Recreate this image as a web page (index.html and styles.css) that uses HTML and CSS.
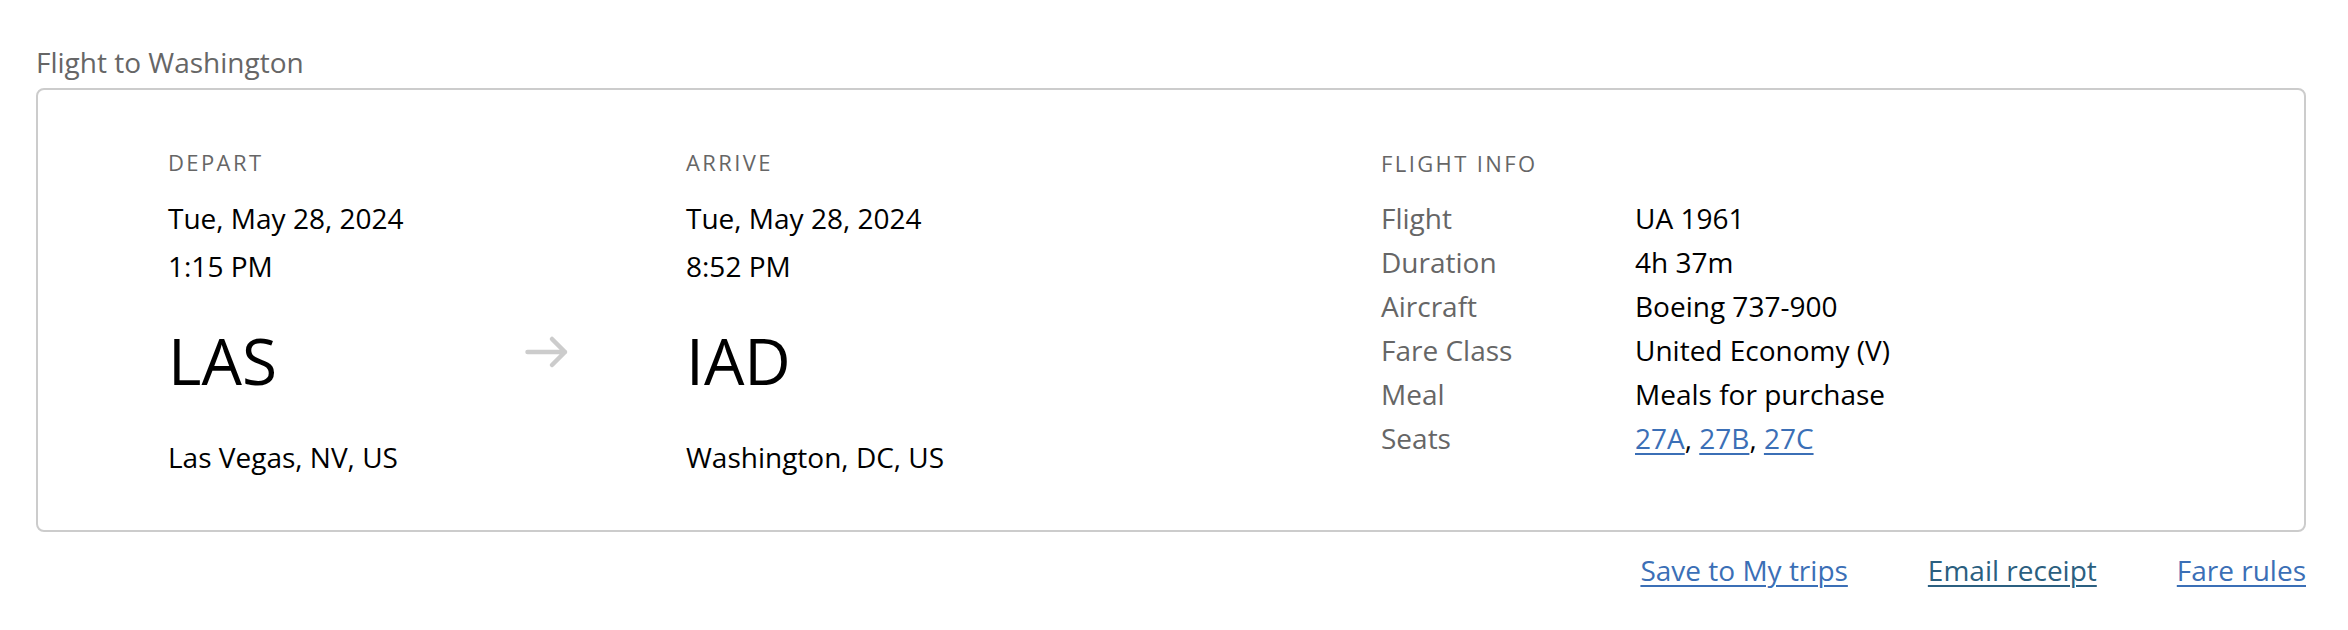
FILE: index.html
```html
<!DOCTYPE html>
<html lang="en">
<head>
<meta charset="utf-8">
<title>Flight to Washington</title>
<link rel="stylesheet" href="styles.css">
</head>
<body>
<section class="trip">
  <h2 class="trip-title">Flight to Washington</h2>
  <div class="card">
    <div class="leg">
      <div class="point">
        <div class="label">DEPART</div>
        <div class="date">Tue, May 28, 2024</div>
        <div class="time">1:15 PM</div>
        <div class="code">LAS</div>
        <div class="city">Las Vegas, NV, US</div>
      </div>
      <div class="arrow">
        <svg width="44" height="34" viewBox="0 0 44 34" aria-hidden="true">
          <path d="M2.5 17 H40 M27 4 L40 17 L27 30" fill="none" stroke="#cccccc" stroke-width="4.5" stroke-linecap="round" stroke-linejoin="round"/>
        </svg>
      </div>
      <div class="point">
        <div class="label">ARRIVE</div>
        <div class="date">Tue, May 28, 2024</div>
        <div class="time">8:52 PM</div>
        <div class="code">IAD</div>
        <div class="city">Washington, DC, US</div>
      </div>
    </div>
    <div class="info">
      <div class="label info-label">FLIGHT INFO</div>
      <dl class="info-list">
        <dt>Flight</dt><dd>UA 1961</dd>
        <dt>Duration</dt><dd>4h 37m</dd>
        <dt>Aircraft</dt><dd>Boeing 737-900</dd>
        <dt>Fare Class</dt><dd>United Economy (V)</dd>
        <dt>Meal</dt><dd>Meals for purchase</dd>
        <dt>Seats</dt><dd><a href="#" class="link">27A</a>, <a href="#" class="link">27B</a>, <a href="#" class="link">27C</a></dd>
      </dl>
    </div>
  </div>
  <nav class="actions">
    <a href="#" class="link">Save to My trips</a>
    <a href="#" class="link link-dark">Email receipt</a>
    <a href="#" class="link">Fare rules</a>
  </nav>
</section>
</body>
</html>
```
FILE: styles.css
```css
* { box-sizing: border-box; }

html, body {
  margin: 0;
  padding: 0;
  background: #ffffff;
}

body {
  font-family: "Open Sans", "Noto Sans", sans-serif;
  color: #000000;
}

.trip {
  padding: 43px 42px 0 36px;
}

.trip-title {
  margin: 0 0 7px 0;
  font-size: 28px;
  font-weight: 400;
  line-height: 38px;
  color: #666666;
}

.card {
  display: flex;
  border: 2px solid #cccccc;
  border-radius: 8px;
  height: 444px;
  padding: 57px 0 0 130px;
}

.leg {
  display: grid;
  grid-template-columns: 357px 161px 695px;
}

.label {
  font-size: 22px;
  line-height: 30px;
  letter-spacing: 2.4px;
  color: #666666;
}

.date, .time {
  font-size: 28px;
  line-height: 48px;
}

.date { margin-top: 17px; }

.code {
  font-size: 64px;
  line-height: 90px;
  margin-top: 26px;
}

.city {
  font-size: 28px;
  line-height: 40px;
  margin-top: 31px;
}

.arrow {
  padding-top: 188px;
}

.arrow svg { display: block; }

.info-label { margin-top: 1px; }

.info-list {
  display: grid;
  grid-template-columns: 254px auto;
  margin: 18px 0 0 0;
  font-size: 28px;
  line-height: 44px;
}

.info-list dt { color: #666666; }
.info-list dd { margin: 0; color: #000000; }

.link {
  color: #3b6fb6;
  text-decoration: underline;
  text-decoration-thickness: 2px;
  text-underline-offset: 4px;
}

.link-dark { color: #2b5f80; }

.actions {
  display: flex;
  justify-content: flex-end;
  gap: 80px;
  margin-top: 18px;
  font-size: 28px;
  line-height: 40px;
}
```
